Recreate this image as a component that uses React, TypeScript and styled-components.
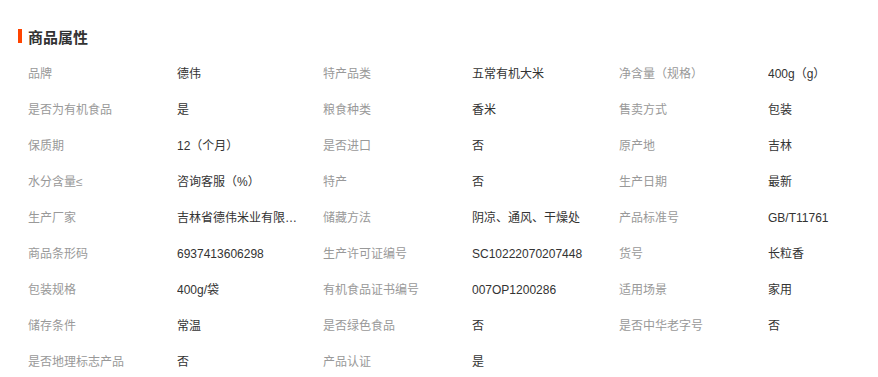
import React from "react";
import styled, { createGlobalStyle } from "styled-components";

const GlobalStyle = createGlobalStyle`
    body {
        margin: 0;
        background: #fff;
        font-family: "Liberation Sans", "Noto Sans CJK SC", sans-serif;
    }
`;

const Panel = styled.div`
    width: 878px;
    height: 377px;
    overflow: hidden;
    padding: 26px 0 0 18px;
    box-sizing: border-box;
`;

const Title = styled.h3`
    display: flex;
    align-items: center;
    gap: 6px;
    margin: 0;
    height: 20px;
    font-size: 15px;
    font-weight: bold;
    color: #333;

    &::before {
        content: '';
        width: 4px;
        height: 14px;
        background: #ff4400;
    }
`;

const AttrList = styled.ul`
    display: grid;
    grid-template-columns: 295px 296px 1fr;
    list-style: none;
    margin: 10px 0 0;
    padding: 0 0 0 10px;
`;

const AttrItem = styled.li`
    display: grid;
    grid-template-columns: 149px 124px;
    height: 36px;
    line-height: 36px;
    font-size: 12px;
`;

const AttrName = styled.span`
    color: #999;
    white-space: nowrap;
`;

const AttrValue = styled.span`
    min-width: 0;
    color: #333;
    white-space: nowrap;
    overflow: hidden;
    text-overflow: ellipsis;
`;

const attrs: [string, string][] = [
    ["品牌", "德伟"],
    ["特产品类", "五常有机大米"],
    ["净含量（规格）", "400g（g）"],
    ["是否为有机食品", "是"],
    ["粮食种类", "香米"],
    ["售卖方式", "包装"],
    ["保质期", "12（个月）"],
    ["是否进口", "否"],
    ["原产地", "吉林"],
    ["水分含量≤", "咨询客服（%）"],
    ["特产", "否"],
    ["生产日期", "最新"],
    ["生产厂家", "吉林省德伟米业有限公司"],
    ["储藏方法", "阴凉、通风、干燥处"],
    ["产品标准号", "GB/T11761"],
    ["商品条形码", "6937413606298"],
    ["生产许可证编号", "SC10222070207448"],
    ["货号", "长粒香"],
    ["包装规格", "400g/袋"],
    ["有机食品证书编号", "007OP1200286"],
    ["适用场景", "家用"],
    ["储存条件", "常温"],
    ["是否绿色食品", "否"],
    ["是否中华老字号", "否"],
    ["是否地理标志产品", "否"],
    ["产品认证", "是"],
];

const App: React.FC = () => {
    return (
        <Panel>
            <GlobalStyle />
            <Title>商品属性</Title>
            <AttrList>
                {attrs.map(([name, value]) => (
                    <AttrItem key={name}>
                        <AttrName>{name}</AttrName>
                        <AttrValue title={value}>{value}</AttrValue>
                    </AttrItem>
                ))}
            </AttrList>
        </Panel>
    );
};

export default App;
